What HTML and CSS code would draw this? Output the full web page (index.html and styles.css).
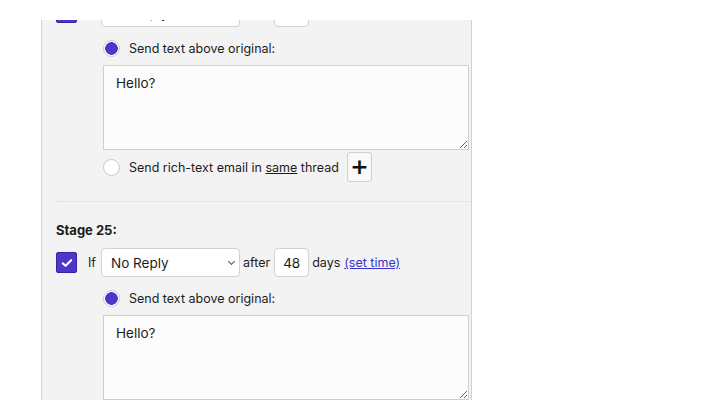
FILE: index.html
```html
<!DOCTYPE html>
<html lang="en">
<head>
    <meta charset="UTF-8">
    <title>Follow-up stages</title>
    <link rel="stylesheet" href="styles.css">
</head>
<body>
    <div class="frame">
        <div class="panel">
            <div class="stage stage-cut">
                <div class="cond-row">
                    <span class="check"><svg viewBox="0 0 20 20" width="14" height="14"><path d="M4 10.5l4 3.5 8-8" fill="none" stroke="#fff" stroke-width="3" stroke-linecap="round" stroke-linejoin="round"/></svg></span>
                    <span class="word word-if">If</span>
                    <div class="select">No Reply<span class="chev"></span></div>
                    <span class="word">after</span>
                    <div class="num">47</div>
                    <span class="word">days</span>
                    <a class="link" href="#">(set time)</a>
                </div>
                <div class="option">
                    <span class="radio on"></span>
                    <span>Send text above original:</span>
                </div>
                <textarea class="msg">Hello?</textarea>
                <div class="option option-plus">
                    <span class="radio"></span>
                    <span>Send rich-text email in <u>same</u> thread</span>
                    <button class="plus">+</button>
                </div>
            </div>

            <div class="divider"></div>

            <div class="stage">
                <div class="stage-title">Stage 25:</div>
                <div class="cond-row">
                    <span class="check"><svg viewBox="0 0 20 20" width="14" height="14"><path d="M4 10.5l4 3.5 8-8" fill="none" stroke="#fff" stroke-width="3" stroke-linecap="round" stroke-linejoin="round"/></svg></span>
                    <span class="word word-if">If</span>
                    <div class="select">No Reply<span class="chev"></span></div>
                    <span class="word">after</span>
                    <div class="num">48</div>
                    <span class="word">days</span>
                    <a class="link" href="#">(set time)</a>
                </div>
                <div class="option">
                    <span class="radio on"></span>
                    <span>Send text above original:</span>
                </div>
                <textarea class="msg">Hello?</textarea>
            </div>
        </div>
    </div>
</body>
</html>
```

FILE: styles.css
```css
:root {
    --purple: #4f35c8;
    --text-color: #1c1c1c;
    --line: #d2d2d2;
}

* {
    margin: 0;
    padding: 0;
    box-sizing: border-box;
}

body {
    font-family: 'Inter', sans-serif;
    font-size: 12.5px;
    color: var(--text-color);
    background: #fff;
    overflow: hidden;
}

.frame {
    margin: 20px 0 0 41px;
    width: 431px;
    height: 380px;
    overflow: hidden;
}

.panel {
    background: #f3f3f3;
    border-left: 1px solid var(--line);
    border-right: 1px solid var(--line);
    padding: 0 1px 20px 14px;
    min-height: 100%;
}

.stage-cut {
    margin-top: -22px;
}

.stage-title {
    font-weight: 700;
    font-size: 13px;
    height: 16px;
    line-height: 16px;
    margin-bottom: 10px;
}

.cond-row {
    display: flex;
    align-items: center;
    height: 29px;
}

.check {
    width: 21px;
    height: 21px;
    background: var(--purple);
    border: 1px solid #3a22a6;
    border-radius: 2px;
    display: flex;
    align-items: center;
    justify-content: center;
}

.word {
    margin: 0 4px 0 3px;
}

.word-if {
    margin: 0 5px 0 11px;
}

.select {
    width: 139px;
    height: 29px;
    background: #fff;
    border: 1px solid var(--line);
    border-radius: 4px;
    padding-left: 9px;
    font-size: 13.5px;
    display: flex;
    align-items: center;
    position: relative;
}

.chev {
    position: absolute;
    right: 5px;
    top: 10px;
    width: 5px;
    height: 5px;
    border-right: 1px solid #555;
    border-bottom: 1px solid #555;
    transform: rotate(45deg);
}

.num {
    width: 35px;
    height: 29px;
    background: #fff;
    border: 1px solid var(--line);
    border-radius: 4px;
    display: flex;
    align-items: center;
    justify-content: center;
    font-size: 13.5px;
}

.link {
    color: #3434d6;
}

.option {
    display: flex;
    align-items: center;
    gap: 9px;
    margin: 12px 0 8px 47px;
    height: 18px;
}

.radio {
    width: 17px;
    height: 17px;
    border-radius: 50%;
    border: 1px solid #c9c9c9;
    background: #fff;
}

.radio.on {
    background: radial-gradient(circle, var(--purple) 0 6px, #fff 6.6px);
}

.msg {
    display: block;
    margin-left: 47px;
    width: 366px;
    height: 85px;
    background: #fcfcfc;
    border: 1px solid #cfcfcf;
    font-family: 'Inter', sans-serif;
    font-size: 13.5px;
    color: var(--text-color);
    padding: 9px 12px;
    outline: none;
}

.option-plus {
    margin-top: 2px;
    margin-bottom: 0;
    height: 30px;
}

.plus {
    width: 25px;
    height: 30px;
    margin-left: -1px;
    background: #f9f9f9;
    border: 1px solid #cfcfcf;
    border-radius: 3px;
    font-family: 'DejaVu Sans', sans-serif;
    font-size: 22px;
    font-weight: 700;
    line-height: 26px;
    color: #111;
}

.divider {
    border-top: 1px dotted #d8d8d8;
    margin: 19px 0 20px;
}
```
